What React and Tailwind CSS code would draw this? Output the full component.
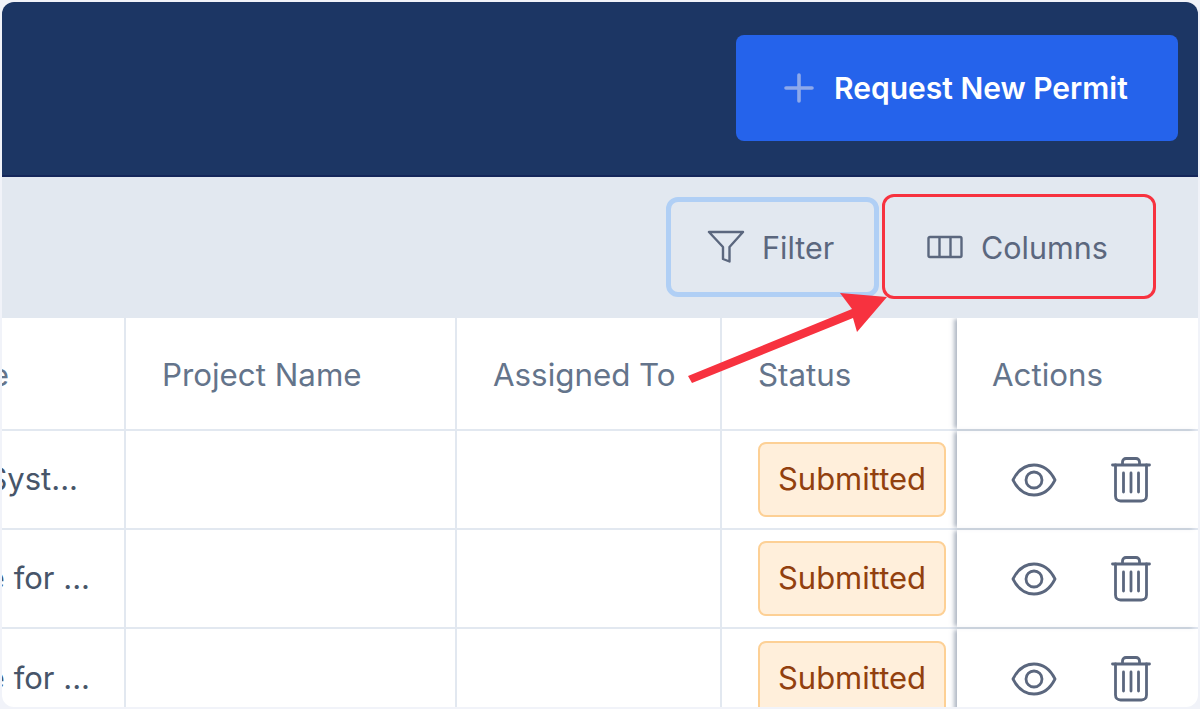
import React from "react";

const columns = "grid-cols-[124px_331px_265px_235px_1fr]";

const rows = [
  { title: "Inspection Syst...", pad: "pr-[46px]" },
  { title: "Compliance for ...", pad: "pr-[34px]" },
  { title: "Compliance for ...", pad: "pr-[34px]" },
];

const EyeIcon = () => (
  <svg width="46" height="36" viewBox="0 0 46 36" fill="none" stroke="#5b677e" strokeWidth="2.8" strokeLinejoin="round">
    <path d="M2 18C7 8 14 3 23 3S39 8 44 18C39 28 32 33 23 33S7 28 2 18Z" />
    <circle cx="23" cy="18" r="8" />
  </svg>
);

const TrashIcon = () => (
  <svg width="40" height="46" viewBox="0 0 40 46" fill="none" stroke="#5b677e" strokeWidth="2.8" strokeLinecap="round" strokeLinejoin="round">
    <path d="M1.5 8H38.5" />
    <path d="M11.500 7V5C11.500 3 13 1.500 15 1.500H25C27 1.500 28.500 3 28.500 5V7" />
    <path d="M4.500 8V39C4.500 42 6.500 44 9.500 44H30.500C33.500 44 35.500 42 35.500 39V8" />
    <path d="M12.500 16V35M20 16V35M27.500 16V35" />
  </svg>
);

const FilterIcon = () => (
  <svg width="38" height="34" viewBox="0 0 38 34" fill="none" stroke="#5b677e" strokeWidth="2.4" strokeLinejoin="round">
    <path d="M2 2H36L22.500 17V31.500L16 29V17Z" />
  </svg>
);

const ColumnsIcon = () => (
  <svg width="36" height="24" viewBox="0 0 36 24" fill="none" stroke="#5b677e" strokeWidth="2.4" strokeLinejoin="round">
    <rect x="1.500" y="2" width="33" height="20" rx="1.500" />
    <path d="M12.500 2V22M23.500 2V22" />
  </svg>
);

const PlusIcon = () => (
  <svg width="30" height="30" viewBox="0 0 30 30" fill="none" stroke="#8ea9ea" strokeWidth="3.600" strokeLinecap="round">
    <path d="M15 2V28M2 15H28" />
  </svg>
);

const HeaderCell = ({ children }) => (
  <div className="flex items-center pl-[36px] pt-[3px] text-[#64748b] text-[31.3px] border-r-2 border-[#e2e8f0]">
    {children}
  </div>
);

const Row = ({ row, className }) => (
  <div className={`grid ${columns} ${className}`}>
    <div className={`flex items-center justify-end overflow-hidden whitespace-nowrap border-r-2 border-[#e2e8f0] text-[#475569] text-[31px] ${row.pad}`}>
      {row.title}
    </div>
    <div className="border-r-2 border-[#e2e8f0]" />
    <div className="border-r-2 border-[#e2e8f0]" />
    <div className="flex items-center pl-[36px] pr-[9px]">
      <span className="flex items-center justify-center w-[188px] h-[75px] rounded-lg bg-[#ffefdb] border-2 border-[#fdd095] text-[#92400e] text-[31px]">
        Submitted
      </span>
    </div>
    <div className="flex items-center pl-[54px] gap-[54px] shadow-[-4px_0_4px_-1px_rgba(100,116,139,0.5)]">
      <EyeIcon />
      <TrashIcon />
    </div>
  </div>
);

export default function App() {
  return (
    <div className="relative w-[1200px] h-[709px] p-[2px] bg-[#f1f3f9] font-['Inter',sans-serif] overflow-hidden">
      <div className="flex flex-col h-full rounded-xl overflow-hidden bg-white">
        {/* Header */}
        <div className="flex justify-end items-start h-[175px] pt-[33px] pr-[20px] bg-[#1c3664] border-b-2 border-[#14265a] shrink-0">
          <button className="flex items-center gap-[20px] w-[442px] h-[106px] pl-[48px] rounded-lg bg-[#2563eb] text-white text-[30px] font-semibold">
            <PlusIcon />
            Request New Permit
          </button>
        </div>

        {/* Toolbar */}
        <div className="flex justify-end items-center gap-[8px] h-[141px] pr-[43px] pb-[2px] bg-[#e2e8f0] shrink-0">
          <button className="flex items-center gap-[17px] w-[213px] h-[100px] pl-[36px] rounded-xl border-[5px] border-[#b0cff5] text-[#5b677e] text-[30.5px]">
            <FilterIcon />
            <span className="pt-[2px]">Filter</span>
          </button>
          <button className="flex items-center gap-[18px] w-[268px] h-[100px] pl-[40px] rounded-xl text-[#5b677e] text-[30.5px]">
            <ColumnsIcon />
            <span className="pt-[2px]">Columns</span>
          </button>
        </div>

        {/* Table */}
        <div className="flex-1 min-h-0 overflow-hidden">
          <div className={`grid ${columns} h-[113px] border-b-2 border-[#e2e8f0]`}>
            <div className="flex items-center justify-end overflow-hidden whitespace-nowrap pr-[115px] pt-[3px] border-r-2 border-[#e2e8f0] text-[#64748b] text-[31.3px]">
              Title
            </div>
            <HeaderCell>Project Name</HeaderCell>
            <HeaderCell>Assigned To</HeaderCell>
            <div className="flex items-center pl-[36px] pt-[3px] text-[#64748b] text-[31.3px]">Status</div>
            <div className="flex items-center pl-[35px] pt-[3px] text-[#64748b] text-[31.3px] shadow-[-4px_0_4px_-1px_rgba(100,116,139,0.5)]">
              Actions
            </div>
          </div>
          <Row row={rows[0]} className="h-[99px] border-b-2 border-[#e2e8f0]" />
          <Row row={rows[1]} className="h-[99px] border-b-2 border-[#e2e8f0]" />
          <Row row={rows[2]} className="h-[99px]" />
        </div>
      </div>

      {/* Annotation */}
      <div className="absolute left-[882px] top-[194px] w-[274px] h-[105px] rounded-xl border-[3px] border-[#f7323f]" />
      <svg className="absolute left-0 top-0 pointer-events-none" width="1200" height="709" viewBox="0 0 1200 709" fill="#f7323f">
        <path d="M688 376L852 309L840 293L887 297L857 332L853 318L692 383Z" />
      </svg>
    </div>
  );
}
